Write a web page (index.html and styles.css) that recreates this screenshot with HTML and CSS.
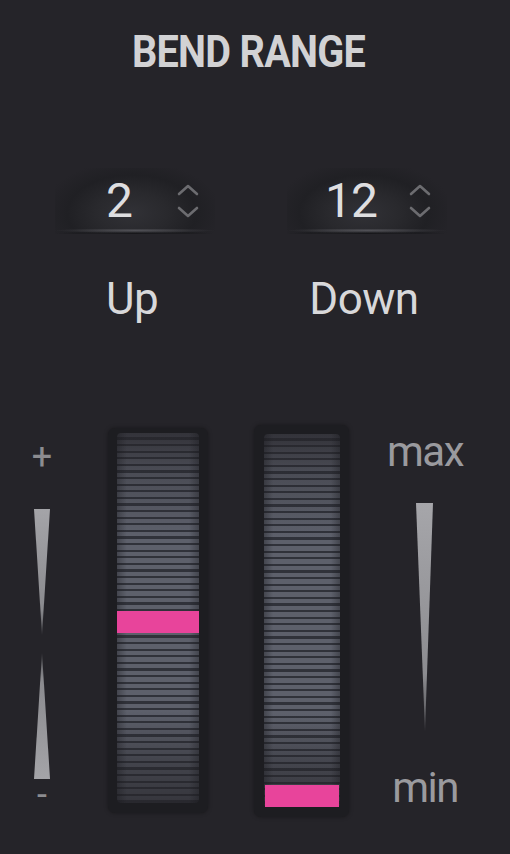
FILE: index.html
```html
<!DOCTYPE html>
<html>
<head>
<meta charset="utf-8">
<link rel="stylesheet" href="styles.css">
</head>
<body>
<div class="panel">
  <h1 class="title">BEND RANGE</h1>
  <div class="values">
    <div class="col col-up">
      <div class="numbox">
        <span class="num">2</span>
        <span class="arrows">
          <svg width="22" height="12" viewBox="0 0 22 12"><path d="M2 10 L11 2 L20 10" fill="none" stroke="#6c6c70" stroke-width="2.6" stroke-linecap="round" stroke-linejoin="round"/></svg>
          <svg width="22" height="12" viewBox="0 0 22 12"><path d="M2 2 L11 10 L20 2" fill="none" stroke="#6c6c70" stroke-width="2.6" stroke-linecap="round" stroke-linejoin="round"/></svg>
        </span>
      </div>
      <div class="label">Up</div>
    </div>
    <div class="col col-down">
      <div class="numbox">
        <span class="num">12</span>
        <span class="arrows">
          <svg width="22" height="12" viewBox="0 0 22 12"><path d="M2 10 L11 2 L20 10" fill="none" stroke="#6c6c70" stroke-width="2.6" stroke-linecap="round" stroke-linejoin="round"/></svg>
          <svg width="22" height="12" viewBox="0 0 22 12"><path d="M2 2 L11 10 L20 2" fill="none" stroke="#6c6c70" stroke-width="2.6" stroke-linecap="round" stroke-linejoin="round"/></svg>
        </span>
      </div>
      <div class="label">Down</div>
    </div>
  </div>
  <div class="sliders">
    <div class="pm">
      <span class="sign plus">+</span>
      <svg class="tri-up" width="18" height="126" viewBox="0 0 18 126">
        <defs>
          <linearGradient id="gA" x1="0" y1="0" x2="0" y2="1">
            <stop offset="0" stop-color="#a4a4a8"/>
            <stop offset="0.8" stop-color="#8a8a8e"/>
            <stop offset="1" stop-color="#4a4a4e"/>
          </linearGradient>
        </defs>
        <polygon points="1,0 17,0 9,126" fill="url(#gA)"/>
      </svg>
      <svg class="tri-down" width="18" height="126" viewBox="0 0 18 126">
        <defs>
          <linearGradient id="gB" x1="0" y1="1" x2="0" y2="0">
            <stop offset="0" stop-color="#a4a4a8"/>
            <stop offset="0.8" stop-color="#8a8a8e"/>
            <stop offset="1" stop-color="#4a4a4e"/>
          </linearGradient>
        </defs>
        <polygon points="1,126 17,126 9,0" fill="url(#gB)"/>
      </svg>
      <span class="sign minus">-</span>
    </div>
    <div class="wheel wheel-up">
      <div class="track">
        <div class="thumb thumb-up"></div>
      </div>
    </div>
    <div class="wheel wheel-down">
      <div class="track">
        <div class="thumb thumb-down"></div>
      </div>
    </div>
    <div class="range">
      <span class="rtext max">max</span>
      <svg class="tri-range" width="20" height="228" viewBox="0 0 20 228">
        <defs>
          <linearGradient id="gC" x1="0" y1="0" x2="0" y2="1">
            <stop offset="0" stop-color="#a6a6aa"/>
            <stop offset="0.75" stop-color="#8c8c90"/>
            <stop offset="1" stop-color="#505054"/>
          </linearGradient>
        </defs>
        <polygon points="1,0 18,0 10,228" fill="url(#gC)"/>
      </svg>
      <span class="rtext min">min</span>
    </div>
  </div>
</div>
</body>
</html>
```

FILE: styles.css
```css
html, body {
  margin: 0;
  padding: 0;
  background: #252429;
}
body {
  width: 510px;
  height: 854px;
  overflow: hidden;
  font-family: Roboto, "Liberation Sans", sans-serif;
}
.panel {
  display: flex;
  flex-direction: column;
  width: 510px;
  height: 854px;
}
.title {
  margin: 26px 0 0 0;
  padding-right: 13px;
  height: 52px;
  line-height: 52px;
  text-align: center;
  font-size: 44px;
  font-weight: 700;
  letter-spacing: -0.8px;
  color: #d2d2d4;
  transform: scaleX(0.9);
  transform-origin: 249px 50%;
}
.values {
  display: flex;
  margin-top: 90px;
  padding-left: 55px;
  gap: 72px;
}
.col {
  width: 160px;
  display: flex;
  flex-direction: column;
}
.numbox {
  height: 66px;
  display: flex;
  align-items: center;
  padding-left: 24px;
  gap: 18px;
  box-sizing: border-box;
  position: relative;
  background: radial-gradient(ellipse 56% 80% at 48% 68%, #313136 0%, #29292d 40%, #202024 72%, #252429 100%);
}
.numbox::after {
  content: "";
  position: absolute;
  left: 0;
  right: 0;
  bottom: 0;
  height: 5px;
  background:
    radial-gradient(ellipse 50% 50% at 50% 30%, rgba(96,96,102,0.7) 0%, rgba(96,96,102,0) 100%),
    radial-gradient(ellipse 50% 50% at 50% 90%, rgba(18,18,21,0.8) 0%, rgba(18,18,21,0) 100%);
}
.num {
  width: 80px;
  text-align: center;
  font-size: 48px;
  font-weight: 400;
  color: #dedee0;
  line-height: 48px;
  letter-spacing: -1px;
}
.arrows {
  display: flex;
  flex-direction: column;
  gap: 10px;
}
.arrows svg {
  display: block;
}
.label {
  margin-top: 40px;
  text-align: center;
  font-size: 44px;
  line-height: 50px;
  color: #d8d8da;
  letter-spacing: -0.5px;
  padding-right: 6px;
}
.sliders {
  display: flex;
  align-items: flex-start;
  margin-top: 101px;
}
.pm {
  width: 46px;
  margin-left: 19px;
  display: flex;
  flex-direction: column;
  align-items: center;
}
.sign {
  font-size: 36px;
  line-height: 36px;
  color: #8c8c90;
}
.plus {
  margin-top: 14px;
}
.tri-up {
  margin-top: 34px;
}
.tri-down {
  margin-top: 18px;
}
.minus {
  margin-top: -2px;
}
.wheel {
  background: #1d1d21;
  border-radius: 7px;
  box-shadow: 0 0 4px rgba(0,0,0,0.35);
  box-sizing: border-box;
}
.wheel-up {
  margin-left: 43px;
  margin-top: 3px;
  width: 100px;
  padding: 5px 9px 10px 9px;
}
.wheel-down {
  margin-left: 46px;
  width: 95px;
  padding: 9px 9px 10px 10px;
}
.track {
  position: relative;
  border-radius: 4px;
  background:
    linear-gradient(to right, rgba(20,20,24,0.35) 0%, rgba(20,20,24,0) 12%, rgba(20,20,24,0) 88%, rgba(20,20,24,0.35) 100%),
    linear-gradient(to bottom, rgba(37,36,41,0.75) 0%, rgba(37,36,41,0.35) 10%, rgba(37,36,41,0) 28%, rgba(37,36,41,0) 75%, rgba(37,36,41,0.45) 88%, rgba(37,36,41,0.7) 100%),
    repeating-linear-gradient(to bottom, #5d606b 0px, #5d606b 4.5px, #30323a 4.5px, #30323a 6.6px);
}
.wheel-up .track {
  width: 82px;
  height: 370px;
}
.wheel-down .track {
  width: 76px;
  height: 373px;
}
.thumb {
  position: absolute;
  left: 0;
  right: 0;
  height: 22px;
  background: #e8449b;
}
.thumb-up {
  top: 178px;
}
.thumb-down {
  bottom: 0;
  left: 1px;
  right: 1px;
}
.range {
  margin-left: 36px;
  width: 80px;
  display: flex;
  flex-direction: column;
  align-items: center;
}
.rtext {
  font-size: 42px;
  line-height: 42px;
  color: #9a9a9e;
  letter-spacing: -1.5px;
}
.max {
  margin-top: 6px;
}
.tri-range {
  margin-top: 30px;
}
.min {
  margin-top: 36px;
}
```
